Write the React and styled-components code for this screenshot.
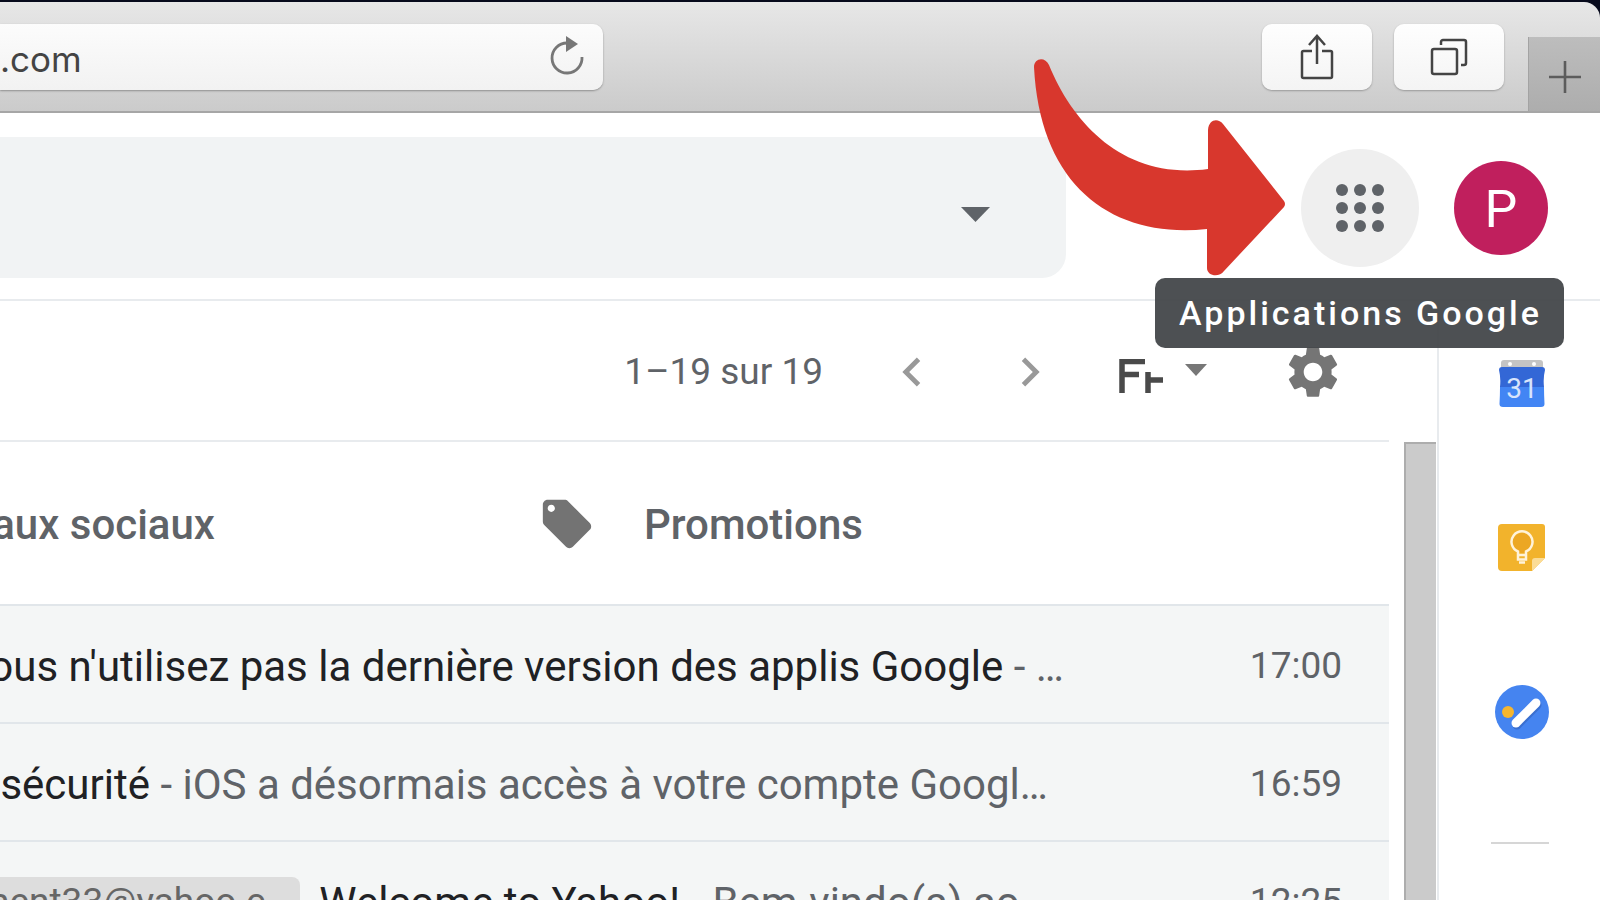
import React from "react";
import styled, { createGlobalStyle } from "styled-components";
import {
  MdChevronLeft,
  MdChevronRight,
  MdLocalOffer,
  MdSettings,
} from "react-icons/md";

const mails = [
  {
    subject: "vous n'utilisez pas la dernière version des applis Google",
    preview: "…",
    time: "17:00",
    end: 36,
  },
  {
    subject: "Alerte de sécurité",
    preview: "iOS a désormais accès à votre compte Googl…",
    time: "16:59",
    end: 52,
  },
  {
    label: "clement33@yahoo.c…",
    subject: "Welcome to Yahoo!",
    preview: "Bem-vindo(a) ao…",
    time: "12:25",
    end: 52,
  },
];

export default function App() {
  return (
    <Window>
      <GlobalStyle />
      <BrowserBar>
        <AddressField>
          <AddressInput aria-label="Adresse" defaultValue=".com" />
          <ReloadButton type="button" aria-label="Actualiser">
            <ReloadIcon />
          </ReloadButton>
        </AddressField>
        <BrowserButtons>
          <BrowserButton type="button" aria-label="Partager">
            <ShareIcon />
          </BrowserButton>
          <BrowserButton type="button" aria-label="Afficher les onglets">
            <TabsIcon />
          </BrowserButton>
        </BrowserButtons>
        <NewTab type="button" aria-label="Nouvel onglet">
          <svg width="34" height="34" stroke="#5c5c5c" strokeWidth="2.6">
            <path d="M17 1v32M1 17h32" />
          </svg>
        </NewTab>
      </BrowserBar>

      <Header>
        <SearchBox>
          <SearchInput aria-label="Rechercher dans les messages" />
          <PlainButton type="button" aria-label="Options de recherche">
            <Caret width={29} height={15} color="#5f6368" />
          </PlainButton>
        </SearchBox>
        <AppsArea>
          <AppsButton type="button" aria-describedby="apps-tip" aria-label="Applications">
            <AppsIcon />
          </AppsButton>
          <Pointer />
          <Tooltip id="apps-tip" role="tooltip">
            Applications Google
          </Tooltip>
        </AppsArea>
        <Avatar type="button">P</Avatar>
      </Header>

      <Body>
        <Pane>
          <Toolbar>
            <Count>1–19 sur 19</Count>
            <PlainButton type="button" aria-label="Plus récents">
              <MdChevronLeft size={58} color="#999" />
            </PlainButton>
            <PlainButton type="button" aria-label="Plus anciens">
              <MdChevronRight size={58} color="#999" />
            </PlainButton>
            <InputTool type="button" aria-label="Outils de saisie">
              <InputToolIcon />
              <Caret width={22} height={12} color="#777" />
            </InputTool>
            <PlainButton type="button" aria-label="Paramètres">
              <MdSettings size={62} color="#757575" />
            </PlainButton>
          </Toolbar>
          <List>
            <Tabs>
              <SocialTab href="#social">Réseaux sociaux</SocialTab>
              <Tab href="#promotions">
                <MdLocalOffer size={58} color="#737373" />
                Promotions
              </Tab>
            </Tabs>
            {mails.map((mail) => (
              <MailRow key={mail.time}>
                <Message $end={mail.end}>
                  {mail.label && <Label>{mail.label}</Label>}
                  <span>
                    {mail.subject}
                    <Preview> - {mail.preview}</Preview>
                  </span>
                </Message>
                <Time>{mail.time}</Time>
              </MailRow>
            ))}
          </List>
          <Scrollbar />
        </Pane>
        <SidePanel>
          <PanelButton type="button" aria-label="Agenda">
            <CalendarIcon />
          </PanelButton>
          <PanelButton type="button" aria-label="Keep">
            <KeepIcon />
          </PanelButton>
          <PanelButton type="button" aria-label="Tasks">
            <TasksIcon />
          </PanelButton>
          <Divider />
        </SidePanel>
      </Body>
    </Window>
  );
}

/* icons */

const Caret = ({ width, height, color }) => (
  <svg width={width} height={height} viewBox="0 0 20 10" preserveAspectRatio="none">
    <path d="M0 0h20L10 10z" fill={color} />
  </svg>
);

const ReloadIcon = () => (
  <svg width="36" height="40" viewBox="0 0 36 40" fill="none">
    <path d="M18 8A15 15 0 1 0 33 22" stroke="#777" strokeWidth="2.8" />
    <path d="M17 1v16l12-8z" fill="#777" />
  </svg>
);

const ShareIcon = () => (
  <svg width="34" height="46" viewBox="0 0 34 46" fill="none" stroke="#444" strokeWidth="2.5">
    <path d="M12 17H3.500a1.500 1.500 0 0 0-1.500 1.500v24a1.500 1.500 0 0 0 1.500 1.500h27a1.500 1.500 0 0 0 1.500-1.500v-24a1.500 1.500 0 0 0-1.500-1.500H22" />
    <path d="M17 30V2M9 11l8-9 8 9" />
  </svg>
);

const TabsIcon = () => (
  <svg width="38" height="38" viewBox="-1 -1 38 38" fill="none" stroke="#444" strokeWidth="2.5">
    <rect x="1" y="10" width="25" height="25" rx="2" />
    <path d="M10 6V3a2 2 0 0 1 2-2h21a2 2 0 0 1 2 2v21a2 2 0 0 1-2 2h-3" />
  </svg>
);

const AppsIcon = () => (
  <svg width="48" height="48" viewBox="0 0 48 48" fill="#5f6368">
    {[6, 24, 42].map((y) =>
      [6, 24, 42].map((x) => <circle key={`${x}-${y}`} cx={x} cy={y} r="6" />)
    )}
  </svg>
);

const InputToolIcon = () => (
  <svg width="44" height="34" viewBox="0 0 44 34" stroke="#4a4a4a" fill="none">
    <path d="M3 34V2.500H26M3 15.500H20" strokeWidth="5.500" />
    <path d="M29 13v21M29 21H44" strokeWidth="5.500" />
  </svg>
);

const CalendarIcon = () => (
  <svg width="46" height="48" viewBox="0 0 46 48">
    <path d="M5 0h36a3 3 0 0 1 3 3v6H2V3a3 3 0 0 1 3-3z" fill="#c4c4c4" />
    <circle cx="11" cy="4" r="2" fill="#fff" />
    <circle cx="35" cy="4" r="2" fill="#fff" />
    <path d="M3 7h40q3 0 3 3-2 8-1 17H1Q2 18 0 10q0-3 3-3z" fill="#3367d6" />
    <path d="M1 27h44q0 8 .5 17 0 3-3.500 3H4q-3.500 0-3.500-3Q1 35 1 27z" fill="#4285f4" />
    <text
      x="23"
      y="38"
      textAnchor="middle"
      fontFamily="Roboto, sans-serif"
      fontSize="28"
      fill="#d9e4fb"
    >
      31
    </text>
  </svg>
);

const KeepIcon = () => (
  <svg width="48" height="48" viewBox="0 0 48 48" fill="none">
    <path d="M4 0h40q3 0 3 3v31L34 47H4q-4 0-4-4V4q0-4 4-4z" fill="#f2b32c" />
    <path d="M34 47V37q0-3 3-3h10z" fill="#fbdc96" />
    <circle cx="24" cy="19" r="10" fill="#eca723" />
    <path
      d="M20 31v-3.500a10.500 10.500 0 1 1 8 0V31zM20 31v4.500h8V31M21 38.500h6"
      stroke="#fff3da"
      strokeWidth="2.500"
    />
  </svg>
);

const TasksIcon = () => (
  <svg width="56" height="56" viewBox="0 0 56 56">
    <circle cx="28" cy="28" r="27" fill="#4584f0" />
    <circle cx="14" cy="28" r="6" fill="#f6b62f" />
    <path d="M23 41l20-20" stroke="#3a6fd0" strokeWidth="9" strokeLinecap="round" />
    <path d="M22 39l20-20" stroke="#fff" strokeWidth="9" strokeLinecap="round" />
  </svg>
);

const Pointer = () => (
  <PointerSvg width="252" height="218" viewBox="0 0 252 218" aria-hidden="true">
    <path
      d="M0 8C0-1 11-3 15 6C40 67 92 121 174 110V71C175 60 184 59 189 65L250 142Q252 145 250 148L190 212C185 219 173 217 173 209V170C78 180 6 127 0 8z"
      fill="#d8372d"
    />
  </PointerSvg>
);

/* layout */

const GlobalStyle = createGlobalStyle`
  * {
    box-sizing: border-box;
  }
  body {
    margin: 0;
    background: #070a1c;
    font-family: Roboto, sans-serif;
  }
  svg {
    display: block;
    flex-shrink: 0;
  }
  button {
    padding: 0;
    border: 0;
    background: none;
    font: inherit;
  }
`;

const Window = styled.div`
  display: flex;
  flex-direction: column;
  height: 100vh;
  padding-top: 2px;
  overflow: hidden;
`;

const BrowserBar = styled.div`
  display: flex;
  align-items: flex-start;
  flex-shrink: 0;
  height: 111px;
  border-bottom: 2px solid #a6a6a6;
  border-radius: 0 16px 0 0;
  background: linear-gradient(#e7e7e7, #cbcbcb);
  overflow: hidden;
`;

const AddressField = styled.div`
  display: flex;
  align-items: center;
  width: 603px;
  height: 66px;
  margin-top: 22px;
  padding-right: 18px;
  border-radius: 0 10px 10px 0;
  background: linear-gradient(#fcfcfc, #f2f2f2);
  box-shadow: 0 1px 2px #8f8f8f;
`;

const AddressInput = styled.input`
  flex: 1;
  min-width: 0;
  padding: 4px 0 0;
  border: 0;
  background: none;
  color: #444;
  font: 35px Inter, sans-serif;
`;

const PlainButton = styled.button`
  display: flex;
  align-items: center;
  justify-content: center;
`;

const ReloadButton = styled(PlainButton)`
  padding-bottom: 4px;
`;

const BrowserButtons = styled.div`
  display: flex;
  gap: 22px;
  margin: 22px 24px 0 auto;
`;

const BrowserButton = styled(PlainButton)`
  width: 110px;
  height: 66px;
  border-radius: 10px;
  background: linear-gradient(#fefefe, #f4f4f4);
  box-shadow: 0 1px 2px #999;
`;

const NewTab = styled(PlainButton)`
  width: 72px;
  height: 74px;
  margin-top: 35px;
  padding-top: 6px;
  border-left: 1px solid #a3a3a3;
  background: linear-gradient(#bdbdbd, #adadad);
`;

const Header = styled.header`
  display: flex;
  align-items: center;
  flex-shrink: 0;
  padding: 24px 52px 21px 0;
  border-bottom: 2px solid #e8ebee;
  background: #fff;
`;

const SearchBox = styled.div`
  display: flex;
  flex: 1;
  align-items: center;
  height: 141px;
  margin-right: 235px;
  padding: 14px 76px 0 0;
  border-radius: 0 16px 24px 0;
  background: #f1f3f4;
`;

const SearchInput = styled.input`
  flex: 1;
  min-width: 0;
  border: 0;
  background: none;
  font-size: 42px;
`;

const AppsArea = styled.div`
  position: relative;
  z-index: 1;
  margin-right: 35px;
`;

const AppsButton = styled(PlainButton)`
  width: 118px;
  height: 118px;
  border-radius: 50%;
  background: #efefef;
`;

const PointerSvg = styled.svg`
  position: absolute;
  top: -90px;
  left: -267px;
`;

const Tooltip = styled.div`
  position: absolute;
  top: 129px;
  right: -145px;
  padding: 0 22px 0 24px;
  border-radius: 10px;
  background: rgba(66, 69, 72, 0.94);
  color: #fff;
  font-size: 34px;
  font-weight: 500;
  letter-spacing: 3px;
  line-height: 70px;
  white-space: nowrap;
`;

const Avatar = styled(PlainButton)`
  width: 94px;
  height: 94px;
  padding-top: 3px;
  border-radius: 50%;
  background: #c01f5d;
  color: #fff;
  font-size: 52px;
`;

const Body = styled.div`
  display: flex;
  flex: 1;
  min-height: 0;
  background: #fff;
`;

const Pane = styled.main`
  display: grid;
  flex: 1;
  grid-template-columns: minmax(0, 1fr) 32px;
  grid-template-rows: 141px minmax(0, 1fr);
  column-gap: 15px;
  padding-right: 1px;
`;

const Toolbar = styled.div`
  display: flex;
  align-items: center;
  justify-content: flex-end;
  gap: 60px;
  padding: 2px 45px 0 0;
  border-bottom: 2px solid #e8ebee;
`;

const Count = styled.span`
  color: #5f6368;
  font-size: 37px;
`;

const InputTool = styled(PlainButton)`
  gap: 22px;
  padding: 8px 15px 0 0;

  svg:last-child {
    margin-bottom: 12px;
  }
`;

const List = styled.div`
  grid-column: 1;
  min-height: 0;
  overflow: hidden;
`;

const Tabs = styled.nav`
  display: flex;
  height: 162px;
`;

const Tab = styled.a`
  display: flex;
  align-items: center;
  gap: 48px;
  padding-top: 2px;
  color: #5f6368;
  font-size: 42px;
  font-weight: 500;
  text-decoration: none;
  white-space: nowrap;
`;

const SocialTab = styled(Tab)`
  justify-content: flex-end;
  width: 538px;
  padding-right: 323px;
`;

const MailRow = styled.div`
  display: flex;
  align-items: center;
  height: 118px;
  padding-right: 47px;
  border-top: 2px solid #e1e6ea;
  background: #f4f6f6;
`;

const Message = styled.div`
  display: flex;
  flex: 1;
  align-items: center;
  justify-content: flex-end;
  gap: 19px;
  min-width: 0;
  margin-right: 150px;
  padding: 4px ${(props) => props.$end}px 0 0;
  color: #202124;
  font-size: 42px;
  white-space: nowrap;
`;

const Preview = styled.span`
  color: #5f6368;
`;

const Label = styled.span`
  padding: 0 10px;
  border-radius: 8px;
  background: #ddd;
  color: #666;
  font-size: 37px;
  line-height: 50px;
`;

const Time = styled.time`
  padding-top: 2px;
  color: #5f6368;
  font-size: 37px;
`;

const Scrollbar = styled.div`
  grid-column: 2;
  border: solid #adadad;
  border-width: 2px 0 0 2px;
  background: #cbcbcb;
`;

const SidePanel = styled.aside`
  display: flex;
  flex-direction: column;
  align-items: center;
  gap: 112px;
  width: 163px;
  padding: 57px 0 0 4px;
  border-left: 2px solid #e8ebee;
`;

const PanelButton = styled(PlainButton)`
  width: 56px;
  height: 52px;
`;

const Divider = styled.hr`
  width: 58px;
  margin: -8px 4px 0 0;
  border: 0;
  border-top: 2px solid #d6d6d6;
`;
